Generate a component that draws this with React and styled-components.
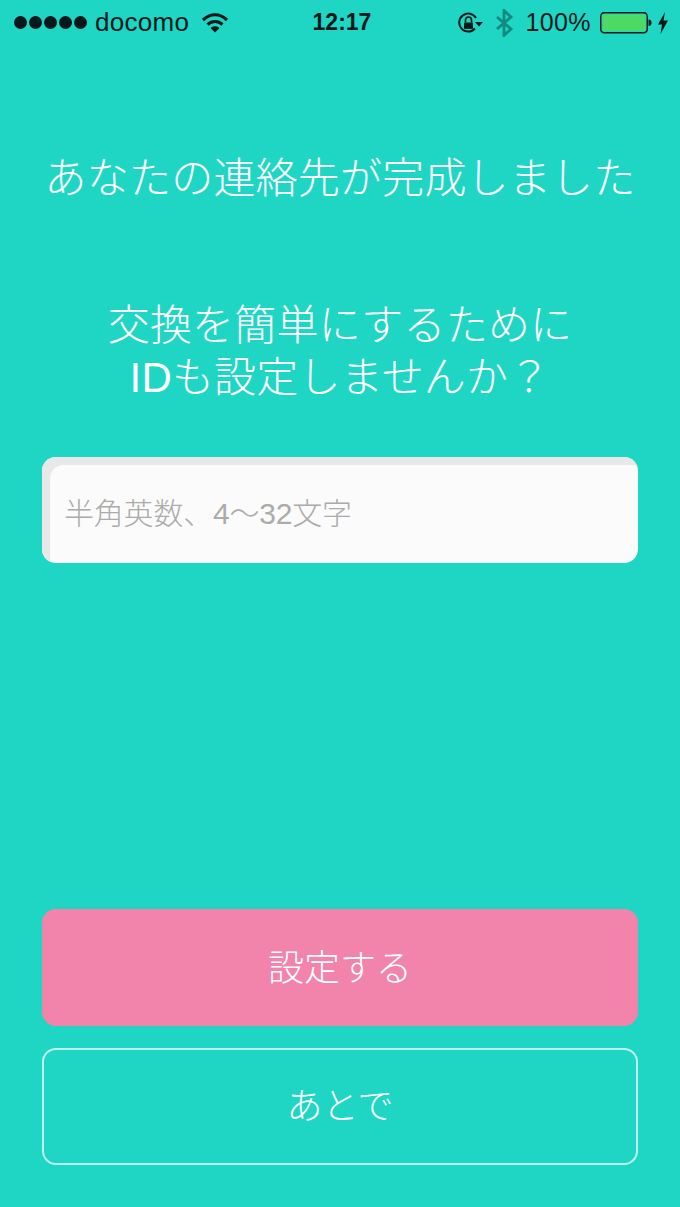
import React from 'react';
import styled, { createGlobalStyle } from 'styled-components';

const Global = createGlobalStyle`
  html, body { margin: 0; padding: 0; background: #1fd6c4; }
  body { font-family: "Liberation Sans", "Noto Sans CJK JP", sans-serif; }
  * { box-sizing: border-box; }
`;

const Screen = styled.div`
  width: 680px;
  height: 1207px;
  background: #1fd6c4;
  display: flex;
  flex-direction: column;
  padding: 0 42px 42px;
  overflow: hidden;
`;

const StatusBar = styled.div`
  height: 45px;
  margin: 0 -42px;
  padding: 0 11px 0 14px;
  display: grid;
  grid-template-columns: 1fr auto 1fr;
  align-items: center;
  color: #06191a;
  font-size: 26px;
`;

const Side = styled.div`
  display: flex;
  align-items: center;
  justify-content: ${(p) => (p.$right ? 'flex-end' : 'flex-start')};
`;

const Dots = styled.div`
  display: flex;
  gap: 2px;
  margin-right: 8px;
`;

const Dot = styled.span`
  width: 13px;
  height: 13px;
  border-radius: 50%;
  background: #06191a;
`;

const Carrier = styled.span`
  letter-spacing: 0.3px;
`;

const Clock = styled.div`
  font-weight: 700;
  font-size: 23px;
  margin-right: -1px;
`;

const Percent = styled.span`
  margin-left: 12px;
  font-size: 25px;
  letter-spacing: 0.4px;
`;

const Heading = styled.h1`
  margin: ${(p) => p.$top}px 0 0;
  font-size: 42px;
  line-height: 52px;
  letter-spacing: 0.2px;
  font-weight: 300;
  text-align: center;
  color: #fff;
  white-space: nowrap;
`;

const IdInput = styled.input`
  display: block;
  width: 100%;
  height: 106px;
  margin-top: 53px;
  padding: 8px 0 0 22px;
  border: 0;
  border-radius: 14px;
  outline: 0;
  background: #fbfbfb;
  box-shadow: inset 8px 8px 0 #e8e8e8;
  font-family: inherit;
  font-weight: 300;
  font-size: 30px;
  letter-spacing: -0.2px;
  color: #333;

  &::placeholder {
    color: #ababab;
    opacity: 1;
  }
`;

const Actions = styled.div`
  margin-top: auto;
  display: flex;
  flex-direction: column;
  gap: 22px;
`;

const Button = styled.button`
  height: 117px;
  border-radius: 14px;
  border: ${(p) => (p.$outline ? '2px solid rgba(255, 255, 255, 0.7)' : '0')};
  background: ${(p) => (p.$outline ? 'transparent' : '#f283ab')};
  color: #fff;
  font-family: inherit;
  font-weight: 300;
  font-size: 36px;
  padding: 0 0 ${(p) => (p.$outline ? 8 : 6)}px;
`;

export default function App() {
  return (
    <Screen>
      <Global />
      <StatusBar>
        <Side>
          <Dots>
            <Dot /><Dot /><Dot /><Dot /><Dot />
          </Dots>
          <Carrier>docomo</Carrier>
          <svg width="26" height="20" viewBox="0 0 26 20" style={{ marginLeft: 13 }}>
            <path d="M1 7C8 0 18 0 25 7" fill="none" stroke="#06191a" strokeWidth="3.2" />
            <path d="M5.5 11.5C10 7.5 16 7.5 20.5 11.5" fill="none" stroke="#06191a" strokeWidth="3.2" />
            <path d="M8.5 15C11 12.6 15 12.6 17.5 15L13 19.5Z" fill="#06191a" />
          </svg>
        </Side>
        <Clock>12:17</Clock>
        <Side $right>
          <svg width="25" height="24" viewBox="0 -1.5 25 24">
            <path d="M17 16A9 9 0 1 1 18 5.5" fill="none" stroke="#06191a" strokeWidth="2" />
            <path d="M17 9.5h8l-4 4.5z" fill="#06191a" />
            <rect x="6" y="10" width="9" height="6.5" rx="1" fill="#06191a" />
            <path d="M7.5 10V7.5a3 3 0 0 1 6 0V10" fill="none" stroke="#06191a" strokeWidth="1.7" />
          </svg>
          <svg width="18" height="28" viewBox="0 0 18 28" style={{ marginLeft: 12 }}>
            <path d="M2 8l14 12-7 6.5V1.5L16 8 2 20" fill="none" stroke="#118a80" strokeWidth="2.8" />
          </svg>
          <Percent>100%</Percent>
          <svg width="52" height="24" viewBox="0 0 52 24" style={{ marginLeft: 9 }}>
            <rect x="0.75" y="1.75" width="46.5" height="20" rx="3.5" fill="none" stroke="#06191a" strokeWidth="1.5" />
            <rect x="2.5" y="3.5" width="43" height="16.5" rx="2" fill="#4cd964" />
            <path d="M48.5 8.5c2 0 3 1.2 3 3.3s-1 3.2-3 3.2z" fill="#06191a" />
          </svg>
          <svg width="12" height="24" viewBox="0 0 12 24" style={{ marginLeft: 5 }}>
            <path d="M8 1L1 13.5h4L3.5 23 11 9.5H6.5z" fill="#06191a" />
          </svg>
        </Side>
      </StatusBar>
      <Heading $top={108}>あなたの連絡先が完成しました</Heading>
      <Heading $top={95}>交換を簡単にするために<br />IDも設定しませんか？</Heading>
      <IdInput placeholder="半角英数、4〜32文字" />
      <Actions>
        <Button>設定する</Button>
        <Button $outline>あとで</Button>
      </Actions>
    </Screen>
  );
}
